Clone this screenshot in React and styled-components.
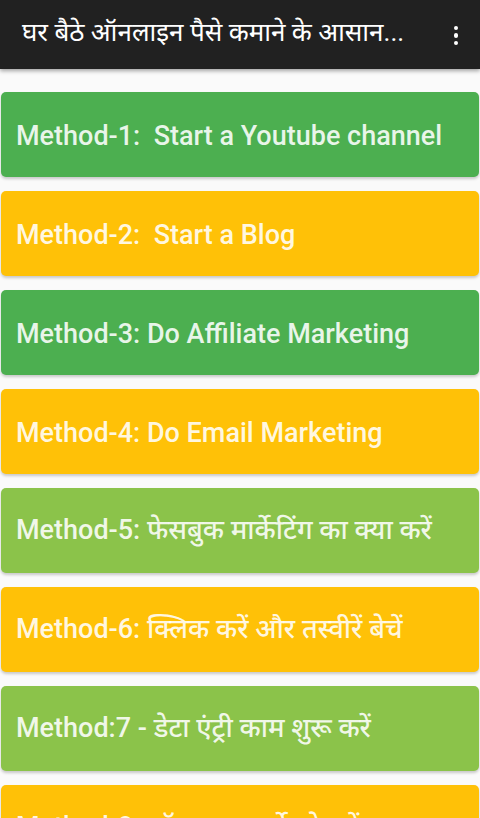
import React from "react";
import styled, { createGlobalStyle } from "styled-components";

const methods = [
  { label: "Method-1:  Start a Youtube channel", tone: "green" },
  { label: "Method-2:  Start a Blog", tone: "amber" },
  { label: "Method-3: Do Affiliate Marketing", tone: "green" },
  { label: "Method-4: Do Email Marketing", tone: "amber" },
  { label: "Method-5: फेसबुक मार्केटिंग का क्या करें", tone: "lime" },
  { label: "Method-6: क्लिक करें और तस्वीरें बेचें", tone: "amber" },
  { label: "Method:7 - डेटा एंट्री काम शुरू करें", tone: "lime" },
  { label: "Method-8: ऑनलाइन सर्वे पूरे करें", tone: "amber" },
];

const tones = {
  green: "#4caf50",
  amber: "#ffc107",
  lime: "#8bc34a",
};

function App() {
  return (
    <>
      <GlobalStyle />
      <Screen>
        <Toolbar>
          <Title>घर बैठे ऑनलाइन पैसे कमाने के आसान...</Title>
          <MenuButton aria-label="menu">
            <Dot />
            <Dot />
            <Dot />
          </MenuButton>
        </Toolbar>
        <List>
          {methods.map((m) => (
            <Card key={m.label} $tone={tones[m.tone]}>
              {m.label}
            </Card>
          ))}
        </List>
      </Screen>
    </>
  );
}

const GlobalStyle = createGlobalStyle`
  html, body {
    margin: 0;
    padding: 0;
    background: #fafafa;
    overflow: hidden;
  }
  body {
    font-family: Roboto, "Noto Sans Devanagari", "Noto Sans", sans-serif;
  }
`;

const Screen = styled.div`
  width: 480px;
  height: 818px;
  overflow: hidden;
  background: #fafafa;
`;

const Toolbar = styled.header`
  display: flex;
  align-items: center;
  justify-content: space-between;
  height: 69px;
  padding: 0 22px 0 22px;
  background: #212121;
  box-shadow: 0 2px 4px rgba(0, 0, 0, 0.35);
  position: relative;
  z-index: 1;
`;

const Title = styled.h1`
  margin: 0;
  color: #ffffff;
  font-size: 26px;
  font-weight: 400;
  white-space: nowrap;
`;

const MenuButton = styled.div`
  display: flex;
  flex-direction: column;
  align-items: center;
  gap: 3px;
  padding-top: 2px;
`;

const Dot = styled.span`
  width: 4.5px;
  height: 4.5px;
  border-radius: 50%;
  background: #ffffff;
`;

const List = styled.div`
  display: flex;
  flex-direction: column;
  gap: 14px;
  padding: 23px 1px 0;
`;

const Card = styled.div`
  display: flex;
  align-items: center;
  height: 85px;
  flex-shrink: 0;
  padding: 3px 15px 0;
  box-sizing: border-box;
  border-radius: 5px;
  background: ${(p) => p.$tone};
  box-shadow: 0 2px 3px rgba(0, 0, 0, 0.2);
  color: rgba(255, 255, 255, 0.88);
  font-size: 27px;
  font-weight: 500;
  white-space: pre;
`;

export default App;
